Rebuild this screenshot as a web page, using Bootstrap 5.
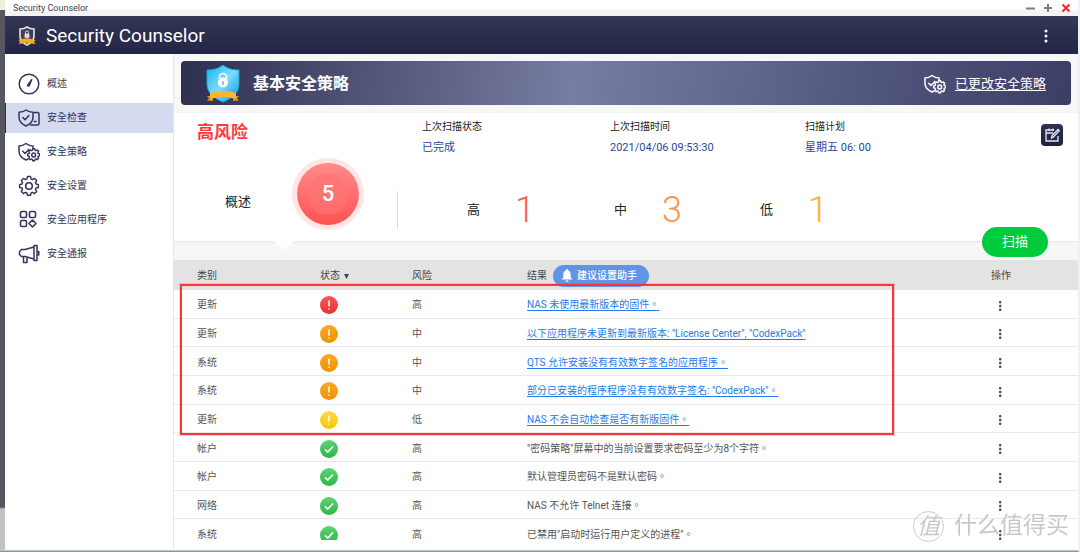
<!DOCTYPE html>
<html lang="zh-Hans">
<head>
<meta charset="utf-8">
<meta name="viewport" content="width=device-width, initial-scale=1">
<title>Security Counselor</title>
<link href="https://cdn.jsdelivr.net/npm/bootstrap@5.3.0/dist/css/bootstrap.min.css" rel="stylesheet">
<style>
body{font-family:Roboto,"Noto Sans CJK SC",sans-serif;font-size:10px;line-height:16px;color:#222;background:linear-gradient(#e8f2d8 10px,#575760 10px,#575760 507px,#c0c4c0 509px)}
.desktop{min-height:100vh;padding:0 0 1px 5px;overflow:hidden;border-bottom:1px solid #929694;border-right:2px solid #f0f0f2}
.titlebar{height:16px;padding:0 7px 0 8px;font-size:9px;color:#444;background:linear-gradient(#fff 9px,#f1f3f7 11px)}
.titlebar button,.plain{border:0;background:none;padding:0;line-height:0}
.appbar{height:38px;padding:1px 28px 0 13px;color:#fff;background:linear-gradient(#343655,#232546)}
.appbar .logo{margin-right:10px}
.apptitle{font-size:19px;line-height:24px;font-weight:400;margin:0}
.side{width:169px;padding-top:15px;background:#fff;border-right:1px solid #e6e6e6;font-family:Roboto,"Noto Sans CJK TC",sans-serif}
.side a{height:30px;margin-bottom:4px;padding-left:12px;color:#33365a;text-decoration:none;border-left:1px solid transparent}
.side a.active{background:#d6daef;border-color:#2d2f52}
.side svg{width:22px;height:22px;margin-right:7px}
.main{background:#f7f7f7;min-width:0}
.banner{height:44px;margin:7px 7px 8px 7px;padding:2px 25px 0 24px;border-radius:4px;color:#fff;background:linear-gradient(100deg,#2d2f4e,#777da2 44%,#50557c 78%,#3c3e66)}
.bannername{font-size:16px;line-height:24px;font-weight:700;margin:0 0 0 12px}
.banner a{font-size:13px;line-height:16px;color:#fff;margin-left:9px;text-underline-offset:2px}
.summary{position:relative;background:#fff;height:128px;padding:5px 15px 0 23px;box-shadow:0 1px 2px #e6e6e6}
.summary::after{content:"";position:absolute;left:100px;top:128px;border:10px solid transparent;border-top:9px solid #fff;border-bottom:0}
.meta{display:grid;grid-template-columns:225fr 188fr 195fr 236fr 22px}
.risk{font-size:17px;line-height:28px;font-weight:700;color:#ff3a3d}
.meta dt{font-weight:400;line-height:16px;margin-top:1px}
.meta dd{margin:5px 0 0;font-size:11px;line-height:16px;color:#2b4796}
.editbtn{width:22px;height:22px;margin-top:6px;border-radius:4px;background:linear-gradient(#303254,#20213f)}
.counts{display:grid;grid-template-columns:200fr 147fr 146fr 373fr;font-size:13px;margin-top:3px}
.ball{width:62px;height:62px;margin:0 5px 0 46px;border-radius:50%;background:radial-gradient(circle,#ff7474aa 20px,transparent 21px),linear-gradient(#ff8b8b,#ff5252);box-shadow:0 0 0 5px #ffe6e3;color:#fff;font-size:22px;font-weight:500}
.level{padding-top:32px}
.level .vr{width:1px;margin-right:-1px;background:#ddd;opacity:1}
.level label{margin:0 35px 0 70px}
.num{font-size:36px;line-height:38px;font-weight:300}
.high{color:#ff5d5f}.medium{color:#ff954c}.low{color:#ffae3d}
.scan{position:absolute;right:30px;top:114px;width:66px;height:30px;border:0;border-radius:15px;background:#00cb3a;color:#fff;font-size:13px;z-index:1}
.results{position:relative;height:280px;overflow:hidden;margin-top:19px;background:#fff;font-family:Roboto,"Noto Sans CJK TC",sans-serif}
.results table{table-layout:fixed;width:100%;height:288px;margin:0;line-height:16px;color:#555;border-collapse:separate;border-spacing:0}
.results thead th{height:30px;padding:2px 0 0;background:#e3e3e3;font-weight:400;color:#444}
.results tbody td{padding:3px 0 0;border-bottom:1px solid #e8e8e8;white-space:nowrap}
.results th:first-child,.results td:first-child{padding-left:23px}
.results th svg{margin-left:1px}
.results td a{color:#257be9;text-underline-offset:2px}
.results td svg{display:block}
.results td button{display:block;margin:1px 0 0 5px}
.helper{height:22px;margin-left:6px;padding:0 12px 0 7px;border:0;border-radius:11px;background:#6095e6;color:#fff;font-size:10px;font-weight:500}
.callout{position:absolute;left:6px;right:184px;top:24px;height:151px;border:2px solid #ff3333;outline:1px solid #ff333333;pointer-events:none}
.foot{height:10px;background:#fff}
.watermark{position:fixed;right:11px;bottom:9px;color:#c8c8c8;text-shadow:0 0 2px #fff,0 0 2px #fff;font-size:23px;line-height:34px;pointer-events:none}
.watermark b{width:31px;height:31px;border:1px solid #ccc;border-radius:50%;font-size:23px;font-weight:400;font-style:italic;margin-right:10px;line-height:29px;text-align:center}
</style>
</head>
<body>
<svg width="0" height="0" class="position-absolute" aria-hidden="true">
<defs>
<linearGradient id="gr" x2="0" y2="1"><stop stop-color="#ff5354"/><stop offset="1" stop-color="#e93131"/></linearGradient>
<linearGradient id="go" x2="0" y2="1"><stop stop-color="#fbaa25"/><stop offset="1" stop-color="#ee9000"/></linearGradient>
<linearGradient id="gy" x2="0" y2="1"><stop stop-color="#ffdb4c"/><stop offset="1" stop-color="#f8c400"/></linearGradient>
<linearGradient id="gg" x2="0" y2="1"><stop stop-color="#5bd573"/><stop offset="1" stop-color="#2fb54a"/></linearGradient>
<linearGradient id="gb" x2="1" y2="1"><stop stop-color="#18b4ee"/><stop offset=".5" stop-color="#80daff"/><stop offset="1" stop-color="#0099df"/></linearGradient>
<path id="bang" d="M9 4.500v6M9 12.400v1.400" stroke="#fff" stroke-width="1.600"/>
<path id="gearpath" d="M9.300 2.200h3.400l.600 2.600 1.500.700 2.400-1.300 2.300 2.400-1.300 2.300.600 1.500 2.600.700v3.200l-2.600.600-.600 1.500 1.300 2.300-2.300 2.300-2.400-1.300-1.500.700-.600 2.500H9.300l-.600-2.500-1.500-.700L4.800 21l-2.300-2.300 1.300-2.300-.600-1.500-2.600-.600v-3.200l2.600-.700.600-1.500-1.300-2.300 2.300-2.400 2.400 1.300 1.500-.700z" stroke-linejoin="round"/>
<symbol id="policy" viewBox="0 0 22 22"><g fill="none" stroke="currentColor" stroke-width="1.500" stroke-linecap="round" stroke-linejoin="round"><path d="M10 18 8 19C3.500 17 1 14 1 10V5c3 0 5-1 7-2.500C10 4 12 5 15 5v2.500M4.800 10.200 7 12.400l3.800-4"/><use href="#gearpath" transform="translate(9.300 6.500) scale(.58)" stroke-width="2.400"/><circle cx="15.700" cy="14" r="1.900"/></g></symbol>
<symbol id="ok" viewBox="0 0 18 18"><circle cx="9" cy="9" r="9" fill="url(#gg)"/><path d="m5 9.300 2.700 2.700L13 6.500" fill="none" stroke="#fff" stroke-width="1.700"/></symbol>
<symbol id="s-high" viewBox="0 0 18 18"><circle cx="9" cy="9" r="9" fill="url(#gr)"/><use href="#bang"/></symbol>
<symbol id="s-mid" viewBox="0 0 18 18"><circle cx="9" cy="9" r="9" fill="url(#go)"/><use href="#bang"/></symbol>
<symbol id="s-low" viewBox="0 0 18 18"><circle cx="9" cy="9" r="9" fill="url(#gy)"/><use href="#bang"/></symbol>
<symbol id="dots" viewBox="0 0 8 12"><g fill="#484b70"><rect x="3" y="1" width="2.400" height="2.400" rx=".8"/><rect x="3" y="4.800" width="2.400" height="2.400" rx=".8"/><rect x="3" y="8.600" width="2.400" height="2.400" rx=".8"/></g></symbol>
</defs>
</svg>
<div class="desktop d-flex flex-column">
<div class="titlebar d-flex align-items-center"><span class="flex-grow-1">Security Counselor</span>
<button type="button" aria-label="最小化"><svg width="10" height="10"><path d="M1 5.500h9" stroke="#777b80" stroke-width="2"/></svg></button>
<button type="button" aria-label="最大化" class="ms-2"><svg width="10" height="10"><path d="M1 5h8M5 1v8" stroke="#777b80" stroke-width="2"/></svg></button>
<button type="button" aria-label="关闭" class="ms-2"><svg width="10" height="10"><path d="m1.500 1.500 7 7m0-7-7 7" stroke="#ee2929" stroke-width="2"/></svg></button></div>
<header class="appbar d-flex align-items-center">
<svg width="18" height="20" viewBox="0 0 18 20" class="logo"><path d="M9 1c2 1.500 4.500 2 7 2v7c0 4-3 7-7 9-4-2-7-5-7-9V3c2.500 0 5-.500 7-2z" fill="#3d4057" stroke="#e8e4d8" stroke-width="1.600"/><path d="M7.500 8V6.500a1.500 1.500 0 0 1 3 0V8" fill="none" stroke="#ddd"/><rect x="6.500" y="7.500" width="5" height="4.500" rx="1.500" fill="#ddd"/><path d="M.5 14c6-2 11-2 17 0l-1.500 2 1.500 2-4-.500C10 16.500 8 16.500 4.500 17.500L.5 18 2 16z" fill="#f7aa28"/></svg>
<h1 class="apptitle flex-grow-1">Security Counselor</h1>
<button type="button" class="plain" aria-label="更多"><svg width="8" height="16" fill="#fff"><circle cx="4" cy="3" r="1.500"/><circle cx="4" cy="8" r="1.500"/><circle cx="4" cy="13" r="1.500"/></svg></button>
</header>
<div class="d-flex flex-grow-1">
<nav class="side flex-shrink-0 bg-white" lang="zh-Hant">
<a href="#" class="d-flex align-items-center"><svg viewBox="0 0 22 22" fill="none" stroke="currentColor" stroke-width="1.500"><circle cx="11" cy="11" r="9.800"/><path d="m9.500 12.500 4.300-6-2.800 6.500z" fill="currentColor" stroke-linejoin="round"/></svg>概述</a>
<a href="#" class="d-flex align-items-center active"><svg viewBox="0 0 22 22" fill="none" stroke="currentColor" stroke-width="1.500" stroke-linecap="round" stroke-linejoin="round"><path d="M8 3C6 4.500 3.500 5.200 1 5.200V10c0 4 2.500 7 7 9 4.500-2 7-5 7-9V5.200C12.500 5.200 10 4.500 8 3zM4.800 10.500l2.300 2.300 3.800-4.200M16 5.500h3.500q1.500 0 1.500 1.500v9.500q0 1.500-1.500 1.500h-7M16.300 14.500h1.700"/></svg>安全检查</a>
<a href="#" class="d-flex align-items-center"><svg><use href="#policy"/></svg>安全策略</a>
<a href="#" class="d-flex align-items-center"><svg viewBox="0 0 22 22" fill="none" stroke="currentColor" stroke-width="1.600"><use href="#gearpath" transform="translate(1.100 -.400) scale(.9)"/><circle cx="11" cy="11" r="3.300"/></svg>安全设置</a>
<a href="#" class="d-flex align-items-center"><svg viewBox="0 0 22 22" fill="none" stroke="currentColor" stroke-width="1.600"><rect x="2.500" y="2.500" width="6" height="6" rx="1.300"/><rect x="11.500" y="2.500" width="6" height="6" rx="1.300"/><rect x="2.500" y="11.500" width="6" height="6" rx="1.300"/><path d="m14.500 11 3.500 3.500-3.500 3.500-3.500-3.500z" stroke-linejoin="round"/></svg>安全应用程序</a>
<a href="#" class="d-flex align-items-center"><svg viewBox="0 0 22 22" fill="none" stroke="currentColor" stroke-width="1.500" stroke-linejoin="round"><path d="M7 6.500 16 4v12l-9-2.500H3.500L1.500 11.500v-3l2-2zM16 2.500h3v15h-3zM19 8.500h1.800v3.500H19M5.500 13.500v6H9V14"/></svg>安全通报</a>
</nav>
<main class="main flex-grow-1">
<section class="banner d-flex align-items-center">
<svg width="36" height="38" viewBox="0 0 36 38"><path d="M18 0c5 4 10 5 16 5v14c0 9-7 14-16 18C9 33 2 28 2 19V5c6 0 11-1 16-5z" fill="url(#gb)" stroke="#10a8e5"/><path d="M14.500 14v-2a3.500 3.500 0 0 1 7 0v2" fill="none" stroke="#fff" stroke-width="1.600"/><circle cx="18" cy="17.500" r="5" fill="#fff"/><path d="M18 16v4" stroke="#58b9e8" stroke-width="1.500"/><path d="M2 31h6v5l-6-.500 2-2zM34 31h-6v5l6-.500-2-2z" fill="#e38f18"/><path d="M5 28q13-4 26 0v6q-13-4-26 0z" fill="#fcb62e"/></svg>
<h2 class="bannername flex-grow-1">基本安全策略</h2>
<svg width="22" height="22"><use href="#policy"/></svg><a href="#">已更改安全策略</a>
</section>
<section class="summary">
<div class="meta"><div class="risk">高风险</div>
<dl class="mb-0"><dt>上次扫描状态</dt><dd>已完成</dd></dl><dl class="mb-0"><dt>上次扫描时间</dt><dd>2021/04/06 09:53:30</dd></dl><dl class="mb-0"><dt>扫描计划</dt><dd>星期五 06: 00</dd></dl>
<button type="button" class="plain editbtn" aria-label="编辑计划"><svg width="16" height="16" viewBox="0 0 16 16" fill="none" stroke="#e8e8f2" stroke-width="1.300"><path d="M10 3H2v11h12V9M2 6h7M5 1.500V4M9 1.500V4M7.500 11l.700-2.500L14 2.500l1.200 1.200L9.500 10z"/></svg></button></div>
<div class="counts">
<div class="d-flex align-items-center"><span class="ms-1 ps-4 pt-3 flex-shrink-0">概述</span><div class="ball d-flex align-items-center justify-content-center flex-shrink-0">5</div></div>
<div class="level d-flex align-items-center"><span class="vr"></span><label for="n-high">高</label><output id="n-high" class="num high">1</output></div>
<div class="level d-flex align-items-center"><label for="n-mid">中</label><output id="n-mid" class="num medium">3</output></div>
<div class="level d-flex align-items-center"><label for="n-low">低</label><output id="n-low" class="num low">1</output></div>
</div>
<button type="button" class="scan">扫描</button>
</section>
<section class="results" lang="zh-Hant">
<table>
<colgroup><col style="width:146px"><col style="width:92px"><col style="width:115px"><col><col style="width:87px"></colgroup>
<thead><tr><th>类别</th><th>状态 <svg width="7" height="6" fill="#444"><path d="M1 1h5L3.500 6z"/></svg></th><th>风险</th><th><div class="d-flex align-items-center">结果<button type="button" class="helper d-flex align-items-center"><svg width="12" height="14" viewBox="0 0 12 14" fill="#fff" class="me-1"><path d="M6 0q1 0 1 1.200C9 2 9.700 3.500 9.700 6v2.500l1.800 2H.500l1.800-2V6C2.300 3.500 3 2 5 1.200Q5 0 6 0zM4.500 11.500h3q0 1.500-1.500 1.500t-1.500-1.500z"/></svg>建议设置助手</button></div></th><th>操作</th></tr></thead>
<tbody>
<tr><td>更新</td><td><svg width="20" height="18"><use href="#s-high" width="18"/></svg></td><td>高</td><td><a href="#">NAS 未使用最新版本的固件。</a></td><td><button type="button" class="plain" aria-label="操作"><svg width="8" height="12"><use href="#dots"/></svg></button></td></tr>
<tr><td>更新</td><td><svg width="20" height="18"><use href="#s-mid" width="18"/></svg></td><td>中</td><td><a href="#">以下应用程序未更新到最新版本: "License Center", "CodexPack"</a></td><td><button type="button" class="plain" aria-label="操作"><svg width="8" height="12"><use href="#dots"/></svg></button></td></tr>
<tr><td>系统</td><td><svg width="20" height="18"><use href="#s-mid" width="18"/></svg></td><td>中</td><td><a href="#">QTS 允许安装没有有效数字签名的应用程序。</a></td><td><button type="button" class="plain" aria-label="操作"><svg width="8" height="12"><use href="#dots"/></svg></button></td></tr>
<tr><td>系统</td><td><svg width="20" height="18"><use href="#s-mid" width="18"/></svg></td><td>中</td><td><a href="#">部分已安装的程序程序没有有效数字签名: "CodexPack"。</a></td><td><button type="button" class="plain" aria-label="操作"><svg width="8" height="12"><use href="#dots"/></svg></button></td></tr>
<tr><td>更新</td><td><svg width="20" height="18"><use href="#s-low" width="18"/></svg></td><td>低</td><td><a href="#">NAS 不会自动检查是否有新版固件。</a></td><td><button type="button" class="plain" aria-label="操作"><svg width="8" height="12"><use href="#dots"/></svg></button></td></tr>
<tr><td>帐户</td><td><svg width="20" height="18"><use href="#ok" width="18"/></svg></td><td>高</td><td>"密码策略"屏幕中的当前设置要求密码至少为8个字符。</td><td><button type="button" class="plain" aria-label="操作"><svg width="8" height="12"><use href="#dots"/></svg></button></td></tr>
<tr><td>帐户</td><td><svg width="20" height="18"><use href="#ok" width="18"/></svg></td><td>高</td><td>默认管理员密码不是默认密码。</td><td><button type="button" class="plain" aria-label="操作"><svg width="8" height="12"><use href="#dots"/></svg></button></td></tr>
<tr><td>网络</td><td><svg width="20" height="18"><use href="#ok" width="18"/></svg></td><td>高</td><td>NAS 不允许 Telnet 连接。</td><td><button type="button" class="plain" aria-label="操作"><svg width="8" height="12"><use href="#dots"/></svg></button></td></tr>
<tr><td>系统</td><td><svg width="20" height="18"><use href="#ok" width="18"/></svg></td><td>高</td><td>已禁用"启动时运行用户定义的进程"。</td><td><button type="button" class="plain" aria-label="操作"><svg width="8" height="12"><use href="#dots"/></svg></button></td></tr>
</tbody></table>
<div class="callout"></div>
</section>
<div class="foot"></div>
</main>
</div>
</div>
<div class="watermark d-flex align-items-center"><b>值</b>什么值得买</div>
<script src="https://cdn.jsdelivr.net/npm/bootstrap@5.3.0/dist/js/bootstrap.bundle.min.js"></script>
</body>
</html>
